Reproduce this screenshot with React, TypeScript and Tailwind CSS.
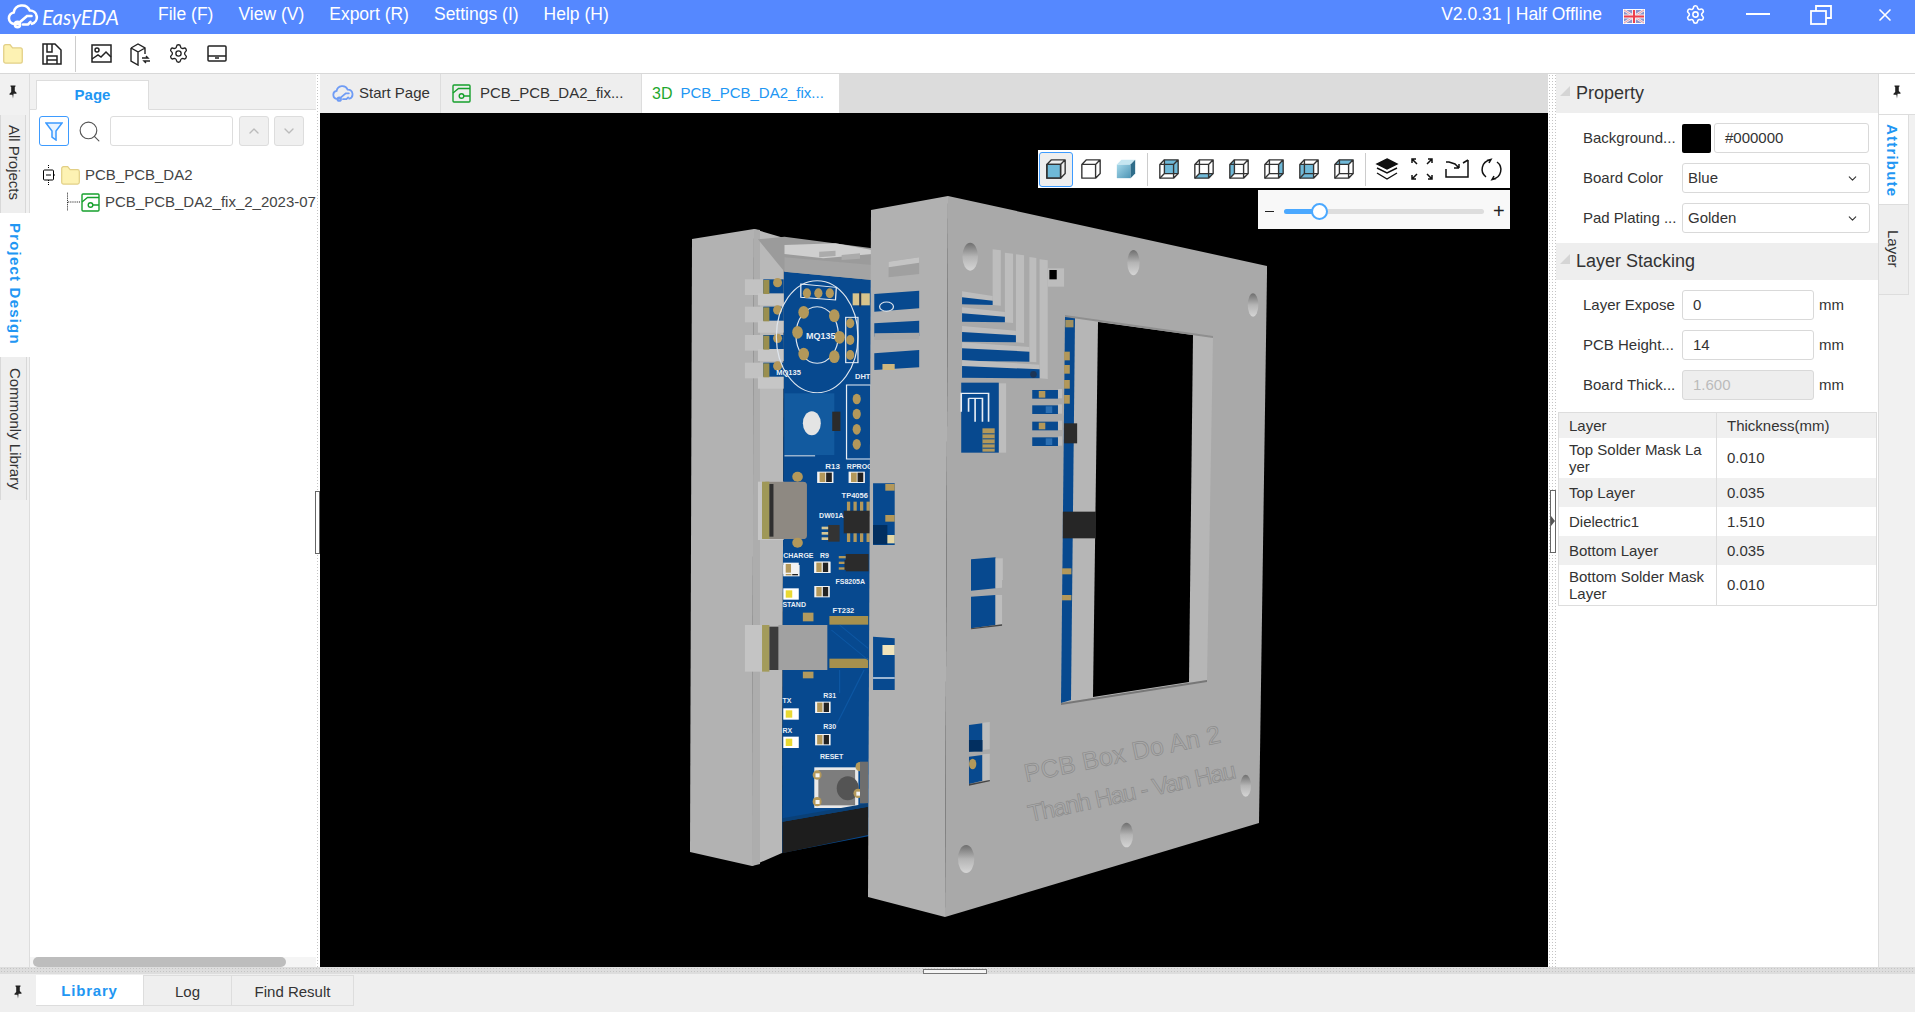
import { ChevronDown, ChevronUp, Search, Settings, X } from "lucide-react"
import type { ReactNode } from "react"

const Pin = () => (
    <svg width="10" height="14" viewBox="0 0 10 14" fill="#222">
        <path d="M2.5 0.5h5v1l-.7.5v4l1.7 1.8v1H5.6L5 13.5 4.400 9.800H1.500v-1L3.200 7V2l-.7-.5z" />
    </svg>
)

const Folder = ({ w = 19, h = 19 }: { w?: number; h?: number }) => (
    <svg className="shrink-0" width={w} height={h} viewBox="0 0 19 19">
        <path d="M.7 2.500a1.800 1.800 0 0 1 1.800-1.800h4.200l2.400 3h7.400a1.800 1.800 0 0 1 1.800 1.800v10.800a1.800 1.800 0 0 1-1.800 1.800H2.500a1.800 1.800 0 0 1-1.800-1.800z" fill="#fdf2b3" stroke="#e2cf85" strokeWidth="1.200" />
    </svg>
)

const PcbIcon = ({ s = 19 }: { s?: number }) => (
    <svg className="shrink-0" width={s} height={s} viewBox="0 0 19 19" fill="none" stroke="#16a02c" strokeWidth="1.400">
        <rect x="1" y="1" width="17" height="17" rx="1" />
        <path d="M1 9 L6.500 4.500 H18 M12 12 H18" />
        <circle cx="9.500" cy="12" r="2.300" />
    </svg>
)

const CloudLogo = ({ c = "#fff", w = 32, h = 26 }: { c?: string; w?: number; h?: number }) => (
    <svg className="shrink-0" width={w} height={h} viewBox="0 0 32 26" fill="none" stroke={c} strokeWidth="2.600" strokeLinecap="round">
        <path d="M11 20H7.500a5.800 5.800 0 0 1-.8-11.500A8.500 8.500 0 0 1 22.800 6.500a6.800 6.800 0 0 1 2.200 13.300" />
        <path d="M13 18 L20 12 H24.500" />
        <circle cx="10.500" cy="20.500" r="2.600" />
        <path d="M16 20.500h5l2.500-2.500" />
    </svg>
)

const Flag = () => (
    <svg width="22" height="15" viewBox="0 0 22 15">
        <rect width="22" height="15" fill="#fff" />
        <rect x="1" y="1" width="20" height="13" fill="#8b93c9" />
        <path d="M1 1l20 13M21 1L1 14" stroke="#f2eef2" strokeWidth="2.500" />
        <path d="M1 1l20 13M21 1L1 14" stroke="#e8808c" strokeWidth="0.800" />
        <path d="M11 1v13M1 7.500h20" stroke="#f2eef2" strokeWidth="4" />
        <path d="M11 1v13M1 7.500h20" stroke="#ee3f4b" strokeWidth="2" />
    </svg>
)

const Cube = ({ v }: { v: string }) => {
    const blue = "#6fb9d8"
    const faces: Record<string, string> = {
        front: "2,7 17,7 17,22 2,22",
        back: "7,2 22,2 22,17 7,17",
        top: "2,7 7,2 22,2 17,7",
        bottom: "2,22 7,17 22,17 17,22",
        left: "2,7 7,2 7,17 2,22",
        right: "17,7 22,2 22,17 17,22",
    }
    if (v === "shaded") {
        return (
            <svg width="22" height="22" viewBox="0 0 24 24">
                <defs>
                    <linearGradient id="shade" x1="0" y1="0" x2="1" y2="1">
                        <stop offset="0" stopColor="#a5d8ea" />
                        <stop offset="1" stopColor="#4d95b5" />
                    </linearGradient>
                </defs>
                <polygon points={faces.front} fill="url(#shade)" />
                <polygon points={faces.top} fill="#c5e6f1" />
                <polygon points={faces.right} fill="#2f6d8a" />
            </svg>
        )
    }
    const solid = v === "solid" || v === "white"
    return (
        <svg width="22" height="22" viewBox="0 0 24 24" fill="none" stroke="#333" strokeWidth="1.500" strokeLinejoin="round">
            {v === "solid" && <polygon points={faces.front} fill={blue} />}
            {faces[v] && <polygon points={faces[v]} fill={blue} stroke="none" />}
            <path d="M2 7h15v15H2zM2 7l5-5h15v15l-5 5M17 7l5-5" />
            {!solid && <path d="M7 2v15h15M7 17l-5 5" />}
        </svg>
    )
}

const ToolSep = () => <div className="w-px h-[33px] bg-[#ccc]" />

// the model in the viewport. a = upper crop coords, b = lower crop coords
const blue = "#07498f"
const gold = "#b3985a"

const Silk = ({ x, y, t, s = 8, low }: { x: number; y: number; t: string; s?: number; low?: boolean }) => (
    <text x={660 + x * 0.408} y={(low ? 560 : 180) + y / 3} fontSize={s} fontWeight="bold" fill="#e8eef5" fontFamily="Liberation Sans">{t}</text>
)

const Scene = () => (
    <svg className="absolute inset-0" width="1228" height="854" viewBox="320 113 1228 854">
        <defs>
            <linearGradient id="hole" x1="0" y1="0" x2="0" y2="1">
                <stop offset="0" stopColor="#6f6f6f" />
                <stop offset="0.5" stopColor="#b5b5b5" />
                <stop offset="1" stopColor="#d5d5d5" />
            </linearGradient>
        </defs>

        {/* back box */}
        <polygon points="692,239 754,229 752,866 690,852" fill="#b2b2b2" />
        <polygon points="754,229 784,238 782,853 752,866" fill="#b9b9b9" />
        <polygon points="754,229 760,230 760,864 752,866" fill="#adadad" />
        <polygon points="784,262 890,280 890,832 782,853" fill={blue} />

        <g transform="translate(660 180) scale(0.40816 0.33333)">
            <polygon points="240,178 305,170 520,205 635,235 635,290 520,300 305,275" fill="#9b9b9b" />
            <polygon points="305,232 520,255 635,245 635,290 520,300 305,275" fill="#a4a4a4" />
            <polygon points="305,195 430,190 520,210 520,222 400,235 305,222" fill="#cfcfcf" />
            <polygon points="390,215 430,212 430,228 390,232" fill="#ababab" />
            <polygon points="445,225 490,220 490,236 445,240" fill="#ababab" />
            {/* side slots */}
            {[298, 380, 465, 548].map(y => (
                <g key={y}>
                    <rect x="208" y={y} width="45" height="47" fill="#c2c2c2" />
                    <rect x="240" y={y + 42} width="63" height="36" fill="#c6c6c6" />
                    <rect x="253" y={y} width="50" height="42" fill={blue} />
                    <rect x="253" y={y + 2} width="15" height="42" fill="#9a8f4f" />
                    <ellipse cx="288" cy={y + 10} rx="11" ry="14" fill={gold} />
                </g>
            ))}
            {/* gas sensor */}
            <ellipse cx="385" cy="470" rx="100" ry="168" fill="none" stroke="#dfe6ee" strokeWidth="3" />
            <ellipse cx="385" cy="465" rx="52" ry="85" fill="none" stroke="#dfe6ee" strokeWidth="3" />
            {[[352, 397], [427, 407], [337, 457], [440, 472], [352, 522], [427, 530]].map(([x, y]) => (
                <ellipse key={x + y} cx={x} cy={y} rx="13" ry="19" fill={gold} />
            ))}
            <polygon points="345,312 432,322 430,360 345,352" fill="none" stroke="#e8eef5" strokeWidth="3" />
            {[360, 388, 416].map(x => <ellipse key={x} cx={x} cy="340" rx="10" ry="15" fill={gold} />)}
            <rect x="455" y="412" width="30" height="136" fill="none" stroke="#e8eef5" strokeWidth="3" />
            {[430, 480, 525].map(y => <ellipse key={y} cx="466" cy={y} rx="10" ry="15" fill={gold} />)}
            <rect x="472" y="340" width="42" height="36" fill="#d7c48c" />
            <rect x="488" y="335" width="5" height="45" fill="#26364e" />
            {/* dht header */}
            <rect x="457" y="615" width="60" height="222" fill="none" stroke="#e8eef5" strokeWidth="3" />
            {[657, 702, 748, 793].map(y => <ellipse key={y} cx="482" cy={y} rx="10" ry="16" fill={gold} />)}
            {/* pot */}
            <rect x="305" y="640" width="122" height="185" fill="#125a9f" />
            <ellipse cx="372" cy="730" rx="22" ry="36" fill="#e4e4e4" />
            <rect x="422" y="695" width="20" height="58" fill="#2b2b2b" />
            <rect x="305" y="826" width="75" height="3" fill="#dfe6ee" />
            {/* usb c */}
            <rect x="240" y="905" width="63" height="175" fill="#c6c6c6" />
            <rect x="250" y="905" width="110" height="172" rx="10" fill="#8e8982" />
            <rect x="250" y="905" width="18" height="172" fill="#9f9857" />
            <rect x="268" y="912" width="10" height="158" fill="#2f2f2f" />
            <ellipse cx="337" cy="890" rx="13" ry="15" fill={gold} />
            <ellipse cx="337" cy="1088" rx="13" ry="15" fill={gold} />
            {/* resistors and chips */}
            {[[385, 875], [462, 875], [302, 1155], [378, 1145]].map(([x, y]) => (
                <g key={x + y}>
                    <rect x={x} y={y} width="40" height="34" fill="#f2f2f2" />
                    <rect x={x + 6} y={y + 3} width="14" height="28" fill={gold} />
                    <rect x={x + 22} y={y + 3} width="14" height="28" fill="#222" />
                </g>
            ))}
            <rect x="450" y="992" width="68" height="68" fill="#2b2b2b" />
            {[458, 474, 490, 506].map(x => (
                <g key={x}>
                    <rect x={x} y="965" width="8" height="27" fill={gold} />
                    <rect x={x} y="1060" width="8" height="26" fill={gold} />
                </g>
            ))}
            <rect x="412" y="1035" width="28" height="50" fill="#333" />
            {[1040, 1056, 1072].map(y => <rect key={y} x="396" y={y} width="16" height="8" fill="#d5c694" />)}
            <rect x="455" y="1122" width="56" height="52" fill="#2b2b2b" />
            {[1128, 1145, 1162].map(y => <rect key={y} x="438" y={y} width="17" height="7" fill={gold} />)}
        </g>

        <g transform="translate(660 560) scale(0.40816 0.33333)">
            {/* leds */}
            {[[302, 85], [302, 445], [302, 530]].map(([x, y]) => (
                <g key={y}>
                    <rect x={x} y={y} width="38" height="34" fill="#fff" />
                    <rect x={x + 6} y={y + 6} width="16" height="22" fill="#e9d932" />
                </g>
            ))}
            {[[378, 78], [380, 425], [380, 522], [378, 5]].map(([x, y]) => (
                <g key={y}>
                    <rect x={x} y={y} width="38" height="34" fill="#f2f2f2" />
                    <rect x={x + 5} y={y + 3} width="13" height="28" fill={gold} />
                    <rect x={x + 21} y={y + 3} width="13" height="28" fill="#222" />
                </g>
            ))}
            <rect x="302" y="8" width="38" height="34" fill="#f2f2f2" />
            <rect x="308" y="12" width="13" height="26" fill={gold} />
            <rect x="452" y="0" width="58" height="30" fill="#2b2b2b" />
            {/* ft232 */}
            <rect x="415" y="168" width="95" height="26" fill="#a5904e" />
            <rect x="415" y="296" width="95" height="28" fill="#a5904e" />
            <rect x="350" y="158" width="26" height="26" fill="#b29a5e" />
            <rect x="350" y="335" width="26" height="20" fill="#b29a5e" />
            {/* usb b */}
            <rect x="208" y="195" width="50" height="140" fill="#c4c4c4" />
            <rect x="250" y="195" width="18" height="140" fill="#a39b5b" />
            <rect x="268" y="200" width="40" height="130" fill="#3c3c3c" />
            <rect x="290" y="195" width="120" height="135" fill="#a1a1a1" />
            <path d="M420 210 L510 300 M440 195 L510 265 M440 330 L440 400 M500 330 L430 500" stroke="#0d57a3" strokeWidth="3" fill="none" />
            {/* button */}
            <rect x="378" y="622" width="108" height="122" fill="#e9e9e9" />
            <rect x="388" y="630" width="90" height="106" fill="#7d7d7d" />
            <ellipse cx="460" cy="685" rx="27" ry="36" fill="#545454" />
            {[[385, 645], [485, 700], [385, 725], [490, 620]].map(([x, y]) => (
                <ellipse key={x + y} cx={x} cy={y} rx="11" ry="14" fill={gold} />
            ))}
            {[[385, 645], [485, 700], [385, 725]].map(([x, y]) => (
                <rect key={x + y} x={x - 4} y={y - 5} width="10" height="12" fill="#f4f4f4" />
            ))}
            <rect x="490" y="605" width="20" height="125" fill="#6e6e6e" />
            <polygon points="300,785 510,740 510,825 300,880" fill="#1d1d1d" />
            <polygon points="300,775 510,730 510,740 300,785" fill="#0a4077" />
        </g>
        <Silk x={285} y={585} t="MQ135" s={7.500} />
        <Silk x={358} y={478} t="MQ135" s={9} />
        <Silk x={478} y={598} t="DHT" s={7.500} />
        <Silk x={405} y={868} t="R13" />
        <Silk x={458} y={868} t="RPROG" s={7} />
        <Silk x={445} y={955} t="TP4056" s={7.500} />
        <Silk x={390} y={1015} t="DW01A" s={7} />
        <Silk x={302} y={1133} t="CHARGE" s={7} />
        <Silk x={392} y={1135} t="R9" s={7} />
        <Silk x={430} y={72} t="FS8205A" s={7} low />
        <Silk x={300} y={140} t="STAND" s={7} low />
        <Silk x={423} y={158} t="FT232" s={7.500} low />
        <Silk x={400} y={415} t="R31" s={7} low />
        <Silk x={400} y={507} t="R30" s={7} low />
        <Silk x={300} y={428} t="TX" s={7} low />
        <Silk x={300} y={518} t="RX" s={7} low />
        <Silk x={392} y={598} t="RESET" s={7} low />

        {/* front box */}
        <polygon points="871,210 948,196 945,917 868,897" fill="#b1b1b1" />
        <polygon points="948,196 1267,266 1267,272 1259,823 945,917" fill="#a9a9a9" />
        <polygon points="1065,316 1213,337 1207,680 1061,703" fill="#b6b6b6" />
        <polygon points="1065,316 1075,318 1071,700 1061,703" fill={blue} />
        <polygon points="1098,322 1193,335 1189,682 1093,697" fill="#000" />
        <polygon points="1061,703 1207,680 1207,682 1061,705" fill="#777" />
        <polygon points="1065,315 1213,336 1213,338 1065,317" fill="#8f8f8f" />

        <g transform="translate(660 180) scale(0.40816 0.33333)">
            {/* cutouts on the left face */}
            <polygon points="560,245 635,232 635,282 560,292" fill="#a0a0a0" />
            <polygon points="560,245 635,232 635,248 560,262" fill="#c4c4c4" />
            <polygon points="525,342 635,332 635,385 525,395" fill={blue} />
            <polygon points="525,430 635,422 635,468 525,470" fill={blue} />
            <polygon points="525,460 635,458 635,478 525,480" fill="#a9a9a9" />
            <polygon points="525,520 635,510 635,562 525,570" fill={blue} />
            <ellipse cx="555" cy="380" rx="17" ry="14" fill="none" stroke="#dfe6ee" strokeWidth="3" />
            <rect x="545" y="552" width="30" height="18" fill="#cdb77f" />
            <polygon points="522,910 575,910 575,1095 522,1095" fill={blue} />
            <rect x="552" y="912" width="23" height="20" fill={gold} />
            <rect x="552" y="1005" width="23" height="20" fill={gold} />
            <rect x="550" y="1065" width="25" height="25" fill="#e4d7a6" />
            <rect x="522" y="1035" width="35" height="58" fill="#022f60" />

            {/* stepped slots on the front */}
            {[
                [740, 352, 815, 375, 835, 205],
                [740, 400, 845, 427, 865, 215],
                [740, 456, 872, 487, 892, 220],
                [740, 505, 905, 545, 922, 228],
                [740, 558, 930, 595, 950, 235],
            ].map(([x1, y1, x2, y2, x3, y3]) => (
                <g key={y1}>
                    <polygon points={`${x2},${y3 + 3} ${x3},${y3 + 6} ${x3},${y2 + 2} ${x2},${y2}`} fill="#bdbdbd" />
                    <polygon points={`${x1},${y1 - 18} ${x2},${y1 - 4} ${x2},${y2} ${x1},${y2 - 5}`} fill="#bdbdbd" />
                    <polygon points={`${x1},${y1} ${x2},${y1 + 10} ${x2},${y2} ${x1},${y2 - 2}`} fill={blue} />
                </g>
            ))}
            <ellipse cx="915" cy="583" rx="8" ry="10" fill="#1c3556" />
            <rect x="950" y="265" width="40" height="55" fill="#bdbdbd" />
            <rect x="954" y="270" width="18" height="28" fill="#000" />

            {/* esp window */}
            <rect x="830" y="610" width="18" height="208" fill="#bdbdbd" />
            <rect x="738" y="608" width="92" height="210" fill={blue} />
            <path d="M738 695 V 640 H805 V 725 M756 695 V 655 M756 655 H772 V 725 M772 655 H790 V 725" fill="none" stroke="#e8eef5" strokeWidth="4" />
            <rect x="790" y="745" width="30" height="70" fill={gold} />
            {[760, 775, 790, 803].map(y => <rect key={y} x="790" y={y} width="30" height="3" fill="#0a4b93" />)}

            {[630, 676, 725, 772].map((y, i) => (
                <g key={y}>
                    <rect x="975" y={y - 3} width="10" height="28" fill="#bdbdbd" />
                    <rect x="912" y={y} width="63" height="26" fill={blue} />
                    <rect x={i % 2 ? 945 : 928} y={y + 3} width="16" height="20" fill={i % 2 ? "#2c6fb2" : gold} />
                </g>
            ))}
            <rect x="990" y="730" width="32" height="60" fill="#2b2b2b" />
            {[515, 555, 600, 645].map(y => <rect key={y} x="990" y={y} width="14" height="26" fill={gold} />)}
            <rect x="993" y="420" width="20" height="22" fill={gold} opacity="0.9" />
            <rect x="987" y="995" width="81" height="80" fill="#262626" />
            <polygon points="762,1138 822,1132 822,1200 762,1200" fill={blue} />
            <polygon points="822,1135 840,1135 840,1200 822,1200" fill="#bdbdbd" />

            {/* screw holes */}
            <ellipse cx="760" cy="230" rx="19" ry="42" fill="url(#hole)" />
            <ellipse cx="1160" cy="248" rx="15" ry="38" fill="url(#hole)" />
            <ellipse cx="1453" cy="375" rx="13" ry="35" fill="url(#hole)" />
        </g>

        <g transform="translate(660 560) scale(0.40816 0.33333)">
            <polygon points="522,230 575,235 575,390 522,390" fill={blue} />
            <rect x="545" y="255" width="30" height="30" fill="#efe3bb" />
            <rect x="522" y="352" width="53" height="4" fill="#e8eef5" />
            <polygon points="762,0 822,0 822,85 762,92" fill={blue} />
            <polygon points="822,0 838,0 838,83 822,85" fill="#bdbdbd" />
            <polygon points="762,110 822,105 822,195 762,205" fill={blue} />
            <polygon points="822,105 838,105 838,193 822,195" fill="#bdbdbd" />
            <polygon points="762,205 838,193 838,197 762,208" fill="#444" />
            <polygon points="757,495 790,490 790,570 757,575" fill={blue} />
            <polygon points="790,488 808,486 808,568 790,570" fill="#bdbdbd" />
            <rect x="757" y="540" width="33" height="35" fill="#022f60" />
            <polygon points="757,590 790,585 790,662 757,672" fill={blue} />
            <polygon points="790,583 808,581 808,660 790,662" fill="#bdbdbd" />
            <polygon points="757,672 808,660 808,664 757,677" fill="#444" />
            <ellipse cx="766" cy="612" rx="9" ry="16" fill={gold} />
            <rect x="985" y="25" width="23" height="18" fill={gold} />
            <rect x="985" y="105" width="23" height="16" fill={gold} />
            <ellipse cx="750" cy="897" rx="20" ry="42" fill="url(#hole)" />
            <ellipse cx="1143" cy="825" rx="16" ry="37" fill="url(#hole)" />
            <ellipse cx="1435" cy="677" rx="13" ry="33" fill="url(#hole)" />
        </g>

        {/* engraved lid text */}
        <text transform="translate(1026 782) rotate(-11.500)" fontSize="25" fill="none" stroke="#8c8c8c" strokeWidth="0.700" fontFamily="Liberation Sans" textLength="200">PCB Box Do An 2</text>
        <text transform="translate(1030 822) rotate(-12)" fontSize="24" fill="none" stroke="#8c8c8c" strokeWidth="0.700" fontFamily="Liberation Sans" textLength="212">Thanh Hau - Van Hau</text>
    </svg>
)

const Tab3D = ({ children, active, className }: { children: ReactNode; active?: boolean; className?: string }) => (
    <div className={`flex items-center h-full border-r border-[#ddd] whitespace-nowrap text-[15px] ${active ? "bg-white text-[#2196f3]" : "bg-[#eeeeee] text-[#333]"} ${className}`}>
        {children}
    </div>
)

const Field = ({ label, children, unit }: { label: string; children: ReactNode; unit?: boolean }) => (
    <div className="flex items-center h-[30px] pl-[27px]">
        <span className="w-[99px] text-[15px] text-[#333] whitespace-nowrap leading-none pb-[2px]">{label}</span>
        {children}
        {unit && <span className="ml-[5px] text-[15px] text-[#333]">mm</span>}
    </div>
)

const Select = ({ value }: { value: string }) => (
    <div className="flex items-center justify-between w-[188px] h-[30px] border border-[#d9d9d9] rounded-[3px] pl-[5px] pr-[10px] pt-[1px] text-[15px] text-[#333]">
        {value}
        <ChevronDown size={13} strokeWidth={2} color="#333" />
    </div>
)

const SectionHead = ({ title, className }: { title: string; className: string }) => (
    <div className={`flex items-center bg-[#eeeeee] ${className}`}>
        <div className="w-0 h-0 ml-[4px] mr-[6px] border-l-[10px] border-l-transparent border-b-[10px] border-b-[#d5d5d5] mt-[-6px]" />
        <span className="text-[18px] text-[#333]">{title}</span>
    </div>
)

const layers: [ReactNode, string, string][] = [
    [<>Top Solder Mask La<br />yer</>, "0.010", "h-[40px] bg-white"],
    ["Top Layer", "0.035", "h-[29px] bg-[#f0f0f0]"],
    ["Dielectric1", "1.510", "h-[29px] bg-white"],
    ["Bottom Layer", "0.035", "h-[29px] bg-[#f0f0f0]"],
    [<>Bottom Solder Mask<br />Layer</>, "0.010", "h-[41px] bg-white"],
]

const dots = "bg-[radial-gradient(#c4c4c4_1px,transparent_1px)] bg-[length:3px_3px]"

export default function App() {
    return (
        <div className="flex flex-col w-screen h-screen overflow-hidden bg-white font-['Liberation_Sans',Arial,sans-serif]">
            {/* title bar */}
            <header className="flex items-center h-[34px] bg-[#5588ff] text-white shrink-0">
                <div className="ml-[7px] mt-[-1px]"><CloudLogo /></div>
                <span className="ml-[3px] w-[116px] text-[20.500px] italic font-['Lato',sans-serif]">EasyEDA</span>
                <nav className="flex gap-[25px] text-[17.500px] pb-[5px]">
                    <span>File (F)</span>
                    <span>View (V)</span>
                    <span>Export (R)</span>
                    <span>Settings (I)</span>
                    <span>Help (H)</span>
                </nav>
                <span className="ml-auto text-[17.500px] pb-[5px]">V2.0.31 | Half Offline</span>
                <div className="ml-[21px] pb-[2px]"><Flag /></div>
                <Settings className="ml-[40px] mb-[6px]" size={21} strokeWidth={1.800} />
                <div className="ml-[40px] mb-[6px] w-[24px] h-[2px] bg-white" />
                <svg className="ml-[40px] mb-[5px]" width="22" height="20" viewBox="0 0 22 20" fill="none" stroke="#fff" strokeWidth="1.800">
                    <rect x="1" y="6" width="15" height="13" />
                    <path d="M6 6V1h15v12h-5" />
                </svg>
                <X className="ml-[43px] mr-[20px] mb-[5px]" size={20} strokeWidth={2} />
            </header>

            {/* toolbar */}
            <div className="flex items-center h-[40px] border-b border-[#d8d8d8] shrink-0 pl-[3px]">
                <Folder w={20} h={20} />
                <svg className="ml-[19px]" width="20" height="22" viewBox="0 0 20 22" fill="none" stroke="#222" strokeWidth="1.500">
                    <path d="M1 1h12l6 6v14H1zM5 1v8h5V1M5 21v-8h10v8M5 17h10" />
                </svg>
                <div className="ml-[13px] w-px h-[36px] bg-[#ccc]" />
                <svg className="ml-[15px]" width="21" height="19" viewBox="0 0 21 19" fill="none" stroke="#222" strokeWidth="1.500">
                    <rect x="1" y="1" width="19" height="17" />
                    <circle cx="6" cy="6" r="2" />
                    <path d="M1 15l6-4 3 2 5-5 5 5" />
                </svg>
                <svg className="ml-[17px]" width="23" height="24" viewBox="0 0 23 24" fill="none" stroke="#222" strokeWidth="1.400">
                    <path d="M2 6l7-4 7 4v6M2 6v13l7 4v-8M2 6l7 4v5M16 6l-7 4" />
                    <path d="M13 16h6l-2-2M21 19h-6l2 2" />
                </svg>
                <Settings className="ml-[16px]" size={21} strokeWidth={1.500} color="#222" />
                <svg className="ml-[18px]" width="20" height="17" viewBox="0 0 20 17" fill="none" stroke="#222" strokeWidth="1.500">
                    <rect x="1" y="1" width="18" height="15" rx="1" />
                    <path d="M1 11h18M8 13h4" />
                </svg>
            </div>

            {/* main */}
            <div className="flex flex-1 min-h-0">
                {/* left rail */}
                <aside className="w-[30px] bg-[#f1f1f1] border-r border-[#ddd] shrink-0 text-[15px]">
                    <div className="flex justify-center pt-[11px] pr-[4px] h-[41px]"><Pin /></div>
                    <div className="flex items-center h-[98px] pt-[10px] pl-[1px] bg-[#eeeeee] border-y border-[#d8d8d8] text-[#333] [writing-mode:vertical-rl]">All Projects</div>
                    <div className="flex items-center h-[144px] pt-[10px] w-[30px] bg-white font-bold tracking-[1.200px] text-[#2196f3] [writing-mode:vertical-rl]">Project Design</div>
                    <div className="flex items-center h-[143px] pt-[11px] pl-[2px] bg-[#eeeeee] border-y border-[#d8d8d8] text-[#333] [writing-mode:vertical-rl]">Commonly Library</div>
                </aside>

                {/* project panel */}
                <section className="relative flex flex-col w-[286px] shrink-0">
                    <div className="flex items-end h-[36px] pl-[6px] bg-[#f1f1f1] border-b border-[#ddd]">
                        <div className="flex justify-center items-center w-[113px] h-[30px] pt-[1px] mb-[-1px] bg-white border border-[#ddd] border-b-white text-[15px] font-bold text-[#2196f3]">Page</div>
                    </div>
                    <div className="flex items-center gap-[5px] mt-[6px] pl-[9px]">
                        <div className="flex items-center justify-center w-[30px] h-[30px] border border-[#3d9bff] rounded-[3px]">
                            <svg width="18" height="20" viewBox="0 0 18 20" fill="#e8f3ff" stroke="#3d9bff" strokeWidth="1.500">
                                <path d="M1 2h16l-6 8v9l-4-3v-6z" />
                            </svg>
                        </div>
                        <Search className="mx-[3px]" size={25} strokeWidth={1.100} color="#555" />
                        <div className="w-[123px] h-[30px] border border-[#ddd] rounded-[3px]" />
                        <div className="flex items-center justify-center w-[30px] h-[30px] ml-[1px] bg-[#f0f0f0] border border-[#ddd] rounded-[3px]"><ChevronUp size={16} color="#bbb" /></div>
                        <div className="flex items-center justify-center w-[30px] h-[30px] bg-[#f0f0f0] border border-[#ddd] rounded-[3px]"><ChevronDown size={16} color="#bbb" /></div>
                    </div>
                    <div className="relative flex items-center mt-[19px] pl-[12px] h-[20px] text-[15px] text-[#444]">
                        <svg className="mr-[6px]" width="13" height="20" viewBox="0 0 13 20" fill="none" stroke="#000">
                            <path d="M6.500 0v4M6.500 15v5M12 10h1" strokeDasharray="1 1" />
                            <rect x="1.500" y="5" width="10" height="10" rx="1" />
                            <path d="M4 10h5" />
                        </svg>
                        <Folder />
                        <span className="ml-[5px]">PCB_PCB_DA2</span>
                    </div>
                    <div className="relative flex items-center mt-[7px] pl-[37px] h-[20px] text-[15px] text-[#444] whitespace-nowrap">
                        <svg className="mr-[1px] shrink-0" width="13" height="20" viewBox="0 0 14 20" fill="none" stroke="#000" strokeDasharray="1 1">
                            <path d="M.5 0v20M1 10h13" />
                        </svg>
                        <PcbIcon />
                        <span className="ml-[5px]">PCB_PCB_DA2_fix_2_2023-07</span>
                    </div>
                    <div className="absolute bottom-0 inset-x-0 flex items-center h-[10px] bg-[#f5f5f5]">
                        <div className="ml-[3px] w-[253px] h-[10px] rounded-full bg-[#bdbdbd]" />
                    </div>
                </section>

                <div className={`relative w-[4px] shrink-0 ${dots}`}>
                    <div className="absolute left-[-1px] top-[417px] w-[5px] h-[63px] border border-[#666] bg-white" />
                </div>

                {/* center */}
                <main className="flex flex-col flex-1 min-w-0">
                    <div className="flex items-center h-[39px] bg-[#dcdcdc] shrink-0">
                        <Tab3D className="w-[121px] pl-[12px]">
                            <CloudLogo c="#6f9cf5" w={22} h={18} />
                            <span className="ml-[5px]">Start Page</span>
                        </Tab3D>
                        <Tab3D className="w-[201px] pl-[11px]">
                            <PcbIcon />
                            <span className="ml-[9px]">PCB_PCB_DA2_fix...</span>
                        </Tab3D>
                        <Tab3D active className="w-[198px] pl-[10px]">
                            <span className="text-[16px] text-[#1fa82f]">3D</span>
                            <span className="ml-[8px]">PCB_PCB_DA2_fix...</span>
                        </Tab3D>
                    </div>
                    <div className="relative flex-1 bg-black overflow-hidden">
                        <Scene />
                        <div className="absolute right-[38px] top-[37px] flex items-center w-[472px] h-[38px] bg-white">
                            <div className="flex items-center justify-center w-[34px] h-[35px] ml-[1px] bg-[#eeeeee] border border-[#3d9bff] rounded-[3px]"><Cube v="solid" /></div>
                            <div className="flex items-center justify-center w-[35px]"><Cube v="white" /></div>
                            <div className="flex items-center justify-center w-[35px]"><Cube v="shaded" /></div>
                            <div className="ml-[4px] mr-[3px]"><ToolSep /></div>
                            <div className="flex">
                                {["back", "bottom", "left", "right", "front", "top"].map(v => (
                                    <div key={v} className="flex items-center justify-center w-[35px]"><Cube v={v} /></div>
                                ))}
                            </div>
                            <div className="ml-[4px] mr-[3px]"><ToolSep /></div>
                            <svg className="ml-[6px]" width="24" height="23" viewBox="0 0 24 23" fill="none" stroke="#111" strokeWidth="1.400">
                                <path d="M12 1l10 5-10 5L2 6z" fill="#111" />
                                <path d="M2 10l10 5 10-5M2 15l10 6 10-6" />
                            </svg>
                            <svg className="ml-[12px]" width="22" height="22" viewBox="0 0 22 22" fill="none" stroke="#111" strokeWidth="1.500">
                                <path d="M1 5V1h4M1 1l5 5M17 1h4v4M21 1l-5 5M1 17v4h4M1 21l5-5M17 21h4v-4M21 21l-5-5" />
                            </svg>
                            <svg className="ml-[12px]" width="24" height="20" viewBox="0 0 24 20" fill="none" stroke="#111" strokeWidth="1.500">
                                <path d="M1 3h3l6 2 4 4m0 0V5m0 4h-5M23 1v17H1v-8M18 4l5-3" />
                            </svg>
                            <svg className="ml-[11px]" width="23" height="23" viewBox="0 0 23 23" fill="none" stroke="#111" strokeWidth="1.500">
                                <path d="M10 2a9.500 9.500 0 0 0-4 17M7 2.500l4-1-2 3.500M13 21a9.500 9.500 0 0 0 4-17M16 20.500l-4 1 2-3.500" />
                            </svg>
                        </div>
                        <div className="absolute right-[38px] top-[77px] flex items-center w-[252px] h-[39px] pt-[3px] bg-[#f8f8f8]">
                            <div className="ml-[7px] w-[9px] h-px bg-[#222]" />
                            <div className="relative ml-[10px] w-[200px] h-[5px] rounded-full bg-[#dddddd]">
                                <div className="w-[32px] h-full rounded-l-full bg-[#4aa8ff]" />
                                <div className="absolute top-[-6px] left-[27px] w-[17px] h-[17px] rounded-full bg-white border-[2.500px] border-[#4aa8ff]" />
                            </div>
                            <span className="ml-[9px] text-[20px] leading-none text-[#222]">+</span>
                        </div>
                    </div>
                </main>

                <div className={`relative w-[8px] shrink-0 ${dots}`}>
                    <div className="absolute left-[2px] top-[416px] w-[6px] h-[63px] border border-[#666] bg-white">
                        <div className="mt-[25px] w-0 h-0 border-y-[5px] border-y-transparent border-l-[4px] border-l-[#555]" />
                    </div>
                </div>

                {/* property panel */}
                <section className="flex flex-col w-[323px] shrink-0 border-r border-[#ddd]">
                    <SectionHead title="Property" className="h-[39px] shrink-0" />
                    <div className="flex flex-col gap-[10px] pt-[10px]">
                        <Field label="Background...">
                            <div className="w-[29px] h-[29px] bg-black rounded-[2px]" />
                            <div className="flex items-center w-[155px] h-[30px] ml-[3px] pl-[10px] border border-[#d9d9d9] rounded-[3px] text-[15px] text-[#333]">#000000</div>
                        </Field>
                        <Field label="Board Color"><Select value="Blue" /></Field>
                        <Field label="Pad Plating ..."><Select value="Golden" /></Field>
                    </div>
                    <SectionHead title="Layer Stacking" className="h-[37px] mt-[10px] shrink-0" />
                    <div className="flex flex-col gap-[10px] pt-[10px]">
                        <Field label="Layer Expose" unit>
                            <div className="flex items-center w-[132px] h-[30px] pl-[10px] border border-[#d9d9d9] rounded-[3px] text-[15px] text-[#333]">0</div>
                        </Field>
                        <Field label="PCB Height..." unit>
                            <div className="flex items-center w-[132px] h-[30px] pl-[10px] border border-[#d9d9d9] rounded-[3px] text-[15px] text-[#333]">14</div>
                        </Field>
                        <Field label="Board Thick..." unit>
                            <div className="flex items-center w-[132px] h-[30px] pl-[10px] border border-[#d9d9d9] rounded-[3px] bg-[#eeeeee] text-[15px] text-[#bbb]">1.600</div>
                        </Field>
                    </div>
                    <table className="ml-[2px] mt-[12px] w-[319px] table-fixed border-collapse border border-[#ddd] text-[15px] leading-[17px] text-[#333]">
                        <thead>
                            <tr className="h-[25px] bg-[#f0f0f0]">
                                <th className="w-[158px] pl-[10px] font-normal text-left border-r border-[#ddd]">Layer</th>
                                <th className="pl-[10px] font-normal text-left">Thickness(mm)</th>
                            </tr>
                        </thead>
                        <tbody>
                            {layers.map(([name, value, row], i) => (
                                <tr key={i} className={row}>
                                    <td className="pl-[10px] border-r border-[#ddd]">{name}</td>
                                    <td className="pl-[10px]">{value}</td>
                                </tr>
                            ))}
                        </tbody>
                    </table>
                </section>

                {/* right rail */}
                <aside className="w-[36px] bg-[#f1f1f1] shrink-0 text-[15px]">
                    <div className="flex justify-center pt-[11px] h-[41px] bg-white border-b border-[#ddd]"><Pin /></div>
                    <div className="flex items-center w-[30px] h-[90px] pt-[9px] pr-[3px] bg-white border-r border-b border-[#ddd] font-bold tracking-[1.200px] text-[#2196f3] [writing-mode:vertical-rl]">Attribute</div>
                    <div className="flex items-center w-[30px] h-[90px] pt-[25px] pr-[2px] bg-[#eeeeee] border-r border-b border-[#ddd] text-[#333] [writing-mode:vertical-rl]">Layer</div>
                </aside>
            </div>

            {/* bottom */}
            <div className={`relative h-[7px] shrink-0 bg-[#dddddd] ${dots}`}>
                <div className="absolute left-[923px] top-[2px] w-[64px] h-[5px] bg-[#f5f5f5] border border-[#777]" />
            </div>
            <footer className="flex items-start h-[38px] bg-[#efefef] shrink-0 text-[15px] pt-[1px]">
                <div className="flex justify-center w-[36px] pt-[10px]"><Pin /></div>
                <div className="flex items-center justify-center w-[107px] h-[31px] pt-[3px] bg-white border-b border-[#ddd] font-bold tracking-[0.800px] text-[#2196f3]">Library</div>
                <div className="flex items-center justify-center w-[89px] h-[31px] pt-[3px] border-x border-y border-[#ddd] text-[#333]">Log</div>
                <div className="flex items-center justify-center w-[122px] h-[31px] pt-[3px] border-y border-r border-[#ddd] text-[#333]">Find Result</div>
            </footer>
        </div>
    )
}
